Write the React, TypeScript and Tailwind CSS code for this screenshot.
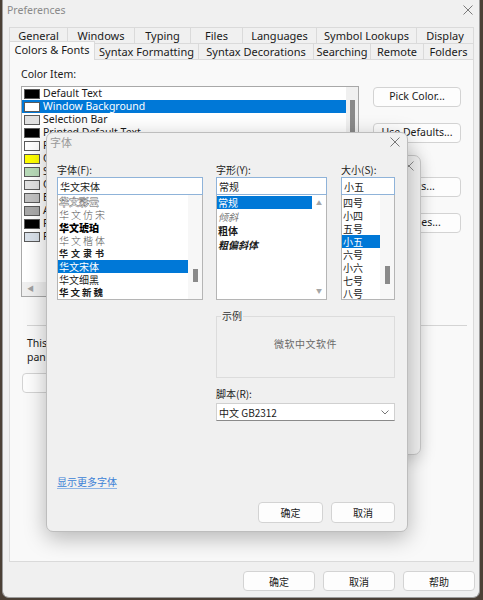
import React from "react";

const FONT = "[font-family:'Noto_Sans','Noto_Sans_CJK_SC',sans-serif]";
const CJK = "[font-family:'Noto_Sans_CJK_SC','Noto_Sans',sans-serif]";

function XIcon({ color = "#6b6b6b", size = 10 }: { color?: string; size?: number }) {
  return (
    <svg width={size} height={size} viewBox="0 0 10 10" fill="none">
      <path d="M0.5 0.5L9.5 9.5M9.5 0.5L0.5 9.5" stroke={color} strokeWidth="1" />
    </svg>
  );
}

function Btn({ children, cls }: { children: React.ReactNode; cls: string }) {
  return (
    <div
      className={`flex items-center justify-center bg-[#fdfdfd] border border-[#d3d3d3] rounded-[4px] text-[#1a1a1a] ${cls}`}
    >
      {children}
    </div>
  );
}

const row1: [string, string][] = [
  ["General", "w-[58px]"],
  ["Windows", "w-[67px]"],
  ["Typing", "w-[56px]"],
  ["Files", "w-[52px]"],
  ["Languages", "w-[74px]"],
  ["Symbol Lookups", "w-[100px]"],
  ["Display", "w-[58px]"],
];
const row2: [string, string][] = [
  ["Syntax Formatting", "w-[103px]"],
  ["Syntax Decorations", "w-[115px]"],
  ["Searching", "w-[57px]"],
  ["Remote", "w-[53px]"],
  ["Folders", "w-[51px]"],
];

const colorItems: [string, string][] = [
  ["Default Text", "bg-black"],
  ["Window Background", "bg-white"],
  ["Selection Bar", "bg-[#e0e0e0]"],
  ["Printed Default Text", "bg-black"],
  ["Printed Background", "bg-white"],
  ["Current Line Highlight", "bg-[#ffff00]"],
  ["Selection Background", "bg-[#b9dbb9]"],
  ["Cursor Line", "bg-[#e2e2e2]"],
  ["Edit Margin", "bg-[#c2c2c2]"],
  ["Active Line Number", "bg-[#a9a9a9]"],
  ["Function Text", "bg-black"],
  ["Function Background", "bg-[#d9e1ea]"],
];

export default function App() {
  return (
    <div className={`relative w-[483px] h-[600px] overflow-hidden bg-[#4b4036] text-[10.5px] text-[#1a1a1a] ${FONT}`}>
      {/* Preferences window */}
      <div className="absolute left-[2px] top-0 w-[478px] h-[598px] bg-[#f0f0f0] border-x border-b border-[#9c9c9c] rounded-b-[7px] flex flex-col">
        <div className="h-[20px] flex items-center justify-between pl-[4px] pr-[6px] text-[#8a8a8a] shrink-0">
          <span className="leading-[14px]">Preferences</span>
          <XIcon color="#7a7a7a" />
        </div>

        {/* tabs */}
        <div className="ml-[6px] mt-[7px] w-[465px] shrink-0 text-[11px]">
          <div className="flex h-[16px]">
            {row1.map(([t, w], i) => (
              <div
                key={t}
                className={`${w} flex items-center justify-center border-t border-l border-[#dadada] ${i === row1.length - 1 ? "border-r" : ""} leading-[14px]`}
              >
                {t}
              </div>
            ))}
          </div>
          <div className="flex h-[16px]">
            <div className="w-[86px] relative z-10 -mt-[2px] -mb-[1px] flex items-center justify-center bg-[#f9f9f9] border-x border-t border-[#dadada] leading-[14px] pb-[2px]">
              Colors &amp; Fonts
            </div>
            {row2.map(([t, w], i) => (
              <div
                key={t}
                className={`${w} flex items-center justify-center border-t border-[#dadada] ${i === 0 ? "" : "border-l"} ${i === row2.length - 1 ? "border-r" : ""} leading-[14px]`}
              >
                {t}
              </div>
            ))}
          </div>
        </div>

        {/* panel */}
        <div className="ml-[6px] w-[465px] h-[503px] bg-[#f9f9f9] border border-[#dadada] shrink-0 flex flex-col">
          <div className="flex pt-[7px] pl-[11px]">
            <div className="w-[338px] flex flex-col">
              <div className="leading-[14px]">Color Item:</div>
              <div className="mt-[5px] h-[211px] border border-[#a8a8a8] bg-white flex flex-col">
                <div className="flex flex-1 min-h-0">
                  <div className="flex-1 overflow-hidden">
                    {colorItems.map(([t, c], i) => (
                      <div
                        key={t}
                        className={`h-[13px] flex items-center pl-[2px] ${i === 1 ? "bg-[#0078d7] text-white" : ""}`}
                      >
                        <div className={`w-[16px] h-[10px] border border-[#5a5a5a] ${c}`} />
                        <span className="ml-[3px] leading-[13px] whitespace-nowrap">{t}</span>
                      </div>
                    ))}
                  </div>
                  <div className="w-[12px] bg-[#f0f0f0] flex justify-center pt-[13px]">
                    <div className="w-[5px] h-[40px] bg-[#8a8a8a]" />
                  </div>
                </div>
                <div className="h-[14px] bg-[#f0f0f0] flex items-center pl-[5px] text-[#a0a0a0] text-[7px]">
                  ◀
                </div>
              </div>
            </div>
            <div className="ml-[14px] pt-[20px] flex flex-col">
              <Btn cls="w-[88px] h-[20px]">Pick Color...</Btn>
              <Btn cls="w-[88px] h-[20px] mt-[16px]">Use Defaults...</Btn>
              <Btn cls="w-[88px] h-[20px] mt-[34px]">Fonts...</Btn>
              <Btn cls="w-[88px] h-[20px] mt-[16px]">Themes...</Btn>
            </div>
          </div>
          <div className="ml-[17px] mr-[6px] mt-[28px] h-px bg-[#d4d4d4]" />
          <div className="ml-[17px] mt-[10px] leading-[14px]">
            <div>This font is used for the text in source windows and</div>
            <div>panels, unless a style specifies another font.</div>
          </div>
          <Btn cls="ml-[12px] mt-[9px] w-[88px] h-[20px]">Font...</Btn>
        </div>

        {/* bottom buttons */}
        <div className={`flex justify-end gap-[8px] pr-[4px] mt-[9px] text-[10px] ${CJK}`}>
          <Btn cls="w-[72px] h-[20px]">确定</Btn>
          <Btn cls="w-[72px] h-[20px]">取消</Btn>
          <Btn cls="w-[72px] h-[20px]">帮助</Btn>
        </div>
      </div>

      {/* middle dialog (behind) */}
      <div className="absolute left-[60px] top-[155px] w-[361px] h-[300px] bg-[#f0f0f0] border border-[#c6c6c6] rounded-[7px] shadow-[0_4px_16px_rgba(0,0,0,0.18)]">
        <div className="flex justify-end pr-[6px] pt-[5px]">
          <XIcon color="#8a8a8a" />
        </div>
      </div>

      {/* font dialog */}
      <div
        className={`absolute left-[46px] top-[132px] w-[362px] h-[400px] bg-[#f0f0f0] border border-[#bdbdbd] rounded-[7px] shadow-[0_6px_22px_rgba(0,0,0,0.28)] flex flex-col text-[10px] ${CJK}`}
      >
        <div className="h-[18px] flex items-center justify-between pl-[3px] pr-[7px] shrink-0">
          <span className="text-[#999999] text-[11px] leading-[14px]">字体</span>
          <XIcon color="#777777" />
        </div>

        <div className="flex pl-[10px] pt-[12px]">
          {/* col 1 */}
          <div className="w-[146px] flex flex-col">
            <div className="h-[14px] leading-[14px]">字体(F):</div>
            <div className="h-[18px] bg-white border border-[#8fb3d9] flex items-center pl-[2px]">华文宋体</div>
            <div className="h-[105px] bg-white border-x border-b border-[#b5b5b5] flex overflow-hidden">
              <div className="flex-1 overflow-hidden">
                <div className="h-[13px] flex items-center pl-[1px] text-transparent [-webkit-text-stroke:0.5px_#666] font-bold">华文彩云</div>
                <div className="h-[13px] flex items-center pl-[1px] text-[#555] font-light tracking-[2px]">华文仿宋</div>
                <div className="h-[13px] flex items-center pl-[1px] font-black text-black">华文琥珀</div>
                <div className="h-[13px] flex items-center pl-[1px] text-[#555] font-light tracking-[2px]">华文楷体</div>
                <div className="h-[13px] flex items-center pl-[1px] text-[9px] font-bold tracking-[3px] text-[#222]">华文隶书</div>
                <div className="h-[13px] flex items-center pl-[1px] bg-[#0078d7] text-white">华文宋体</div>
                <div className="h-[13px] flex items-center pl-[1px]">华文细黑</div>
                <div className="h-[13px] flex items-center pl-[1px] font-bold tracking-[2px] text-[9.5px]">华文新魏</div>
              </div>
              <div className="w-[14px] bg-[#f7f7f7] flex justify-center pt-[74px]">
                <div className="w-[5px] h-[13px] bg-[#8a8a8a]" />
              </div>
            </div>
          </div>

          {/* col 2 */}
          <div className="w-[111px] ml-[13px] flex flex-col">
            <div className="h-[14px] leading-[14px]">字形(Y):</div>
            <div className="h-[18px] bg-white border border-[#8fb3d9] flex items-center pl-[2px]">常规</div>
            <div className="h-[105px] bg-white border-x border-b border-[#b5b5b5] flex overflow-hidden">
              <div className="flex-1 pt-[1px]">
                <div className="h-[13px] flex items-center pl-[1px] bg-[#0078d7] text-white">常规</div>
                <div className="h-[14px] flex items-center pl-[1px] italic text-[#777]">倾斜</div>
                <div className="h-[14px] flex items-center pl-[1px] font-bold">粗体</div>
                <div className="h-[14px] flex items-center pl-[1px] font-bold italic">粗偏斜体</div>
              </div>
              <div className="w-[14px] flex flex-col items-center justify-between py-[4px] text-[#a6a6a6] text-[6px] leading-[8px]">
                <span>▲</span>
                <span>▼</span>
              </div>
            </div>
          </div>

          {/* col 3 */}
          <div className="w-[54px] ml-[14px] flex flex-col">
            <div className="h-[14px] leading-[14px]">大小(S):</div>
            <div className="h-[18px] bg-white border border-[#8fb3d9] flex items-center pl-[2px]">小五</div>
            <div className="h-[105px] bg-white border-x border-b border-[#b5b5b5] flex overflow-hidden">
              <div className="flex-1 pt-[1px]">
                {["四号", "小四", "五号", "小五", "六号", "小六", "七号", "八号"].map((s, i) => (
                  <div
                    key={s}
                    className={`h-[13px] flex items-center pl-[1px] ${i === 3 ? "bg-[#0078d7] text-white" : ""}`}
                  >
                    {s}
                  </div>
                ))}
              </div>
              <div className="w-[14px] bg-[#f7f7f7] flex justify-center pt-[71px]">
                <div className="w-[5px] h-[18px] bg-[#8a8a8a]" />
              </div>
            </div>
          </div>
        </div>

        {/* sample + script */}
        <div className="ml-[169px] w-[179px] mt-[9px] flex flex-col">
          <fieldset className="h-[69px] border border-[#dcdcdc] px-[4px] m-0 min-w-0">
            <legend className="px-[1px] leading-[14px] text-[#333]">示例</legend>
            <div className="h-[40px] flex items-center justify-center text-[#6a6a6a] tracking-[0.5px]">微软中文软件</div>
          </fieldset>
          <div className="mt-[9px] h-[14px] leading-[14px]">脚本(R):</div>
          <div className="mt-[2px] h-[18px] bg-white border border-[#d0d0d0] border-b-[#8a8a8a] flex items-center justify-between pl-[2px] pr-[5px]">
            <span>中文 GB2312</span>
            <svg width="8" height="5" viewBox="0 0 8 5" fill="none">
              <path d="M0.5 0.5L4 4L7.5 0.5" stroke="#777" strokeWidth="1" />
            </svg>
          </div>
        </div>

        <div className="ml-[10px] mt-[54px] h-[14px] leading-[14px] text-[#3c7fd6] underline underline-offset-2 decoration-[#8fb5e6]">
          显示更多字体
        </div>

        <div className="flex justify-end gap-[8px] pr-[12px] mt-[13px]">
          <Btn cls="w-[65px] h-[21px]">确定</Btn>
          <Btn cls="w-[64px] h-[21px]">取消</Btn>
        </div>
      </div>
    </div>
  );
}
